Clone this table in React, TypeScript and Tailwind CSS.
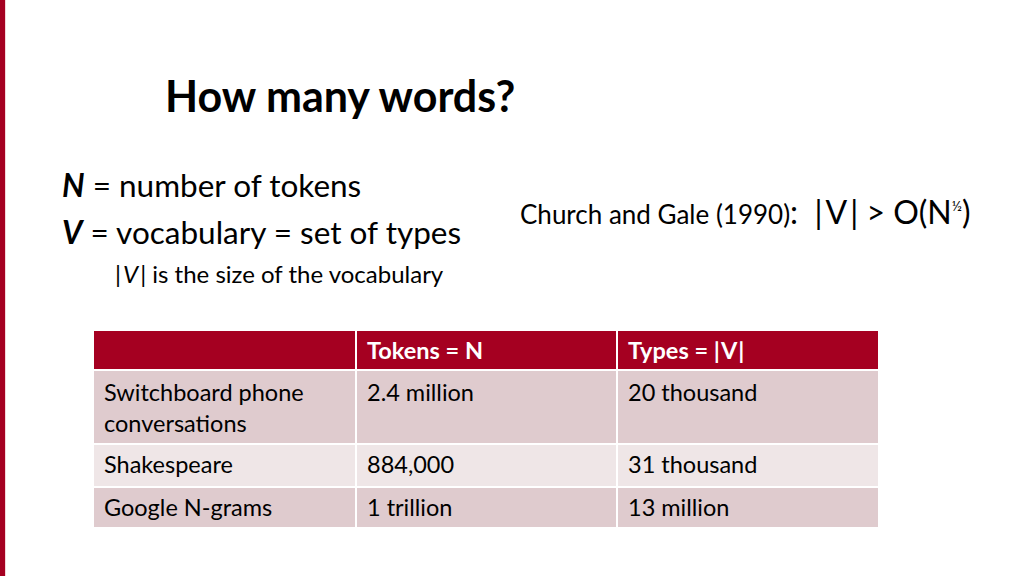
import React from "react";

const rows = [
  ["Switchboard phone conversations", "2.4 million", "20 thousand"],
  ["Shakespeare", "884,000", "31 thousand"],
  ["Google N-grams", "1 trillion", "13 million"],
];

export default function App() {
  return (
    <div
      className="w-[1024px] h-[576px] bg-white flex overflow-hidden text-black"
      style={{ fontFamily: "Lato, 'Open Sans', sans-serif" }}
    >
      <div className="w-[5px] h-full bg-[#a50021] border-r border-[#f3d6da] box-content" />
      <div className="flex-1 flex flex-col">
        <h1 className="ml-[159px] mt-[68px] text-[43px] leading-[56px] font-bold">How many words?</h1>
        <div className="flex mt-[38px]">
          <div className="ml-[56px] w-[458px] flex flex-col">
            <div className="text-[31.5px] leading-[47px] whitespace-nowrap">
              <span className="font-bold italic">N</span> = number of tokens
            </div>
            <div className="text-[31.5px] leading-[47px] whitespace-nowrap">
              <span className="font-bold italic">V</span> = vocabulary = set of types
            </div>
            <div className="ml-[53px] text-[24px] leading-[35px] whitespace-nowrap">
              |<span className="italic mx-[2px]">V</span>| is the size of the vocabulary
            </div>
          </div>
          <div className="mt-[30px] text-[32px] leading-[40px] whitespace-nowrap">
            <span className="text-[26px]">Church and Gale (1990)</span>
            <span>
              :&nbsp; |<span className="mx-[3px]">V</span>| &gt; O(N
              <span className="text-[14px] relative -top-[13px]">½</span>)
            </span>
          </div>
        </div>
        <div className="ml-[88px] mt-[40px] w-[786px] flex flex-col gap-[2px] text-[23.5px]">
          <div className="grid grid-cols-[261px_259px_260px] gap-[2px] h-[38px] bg-white">
            <div className="bg-[#a50021]" />
            <div className="bg-[#a50021] text-white font-bold px-[10px] leading-[38px]">Tokens = N</div>
            <div className="bg-[#a50021] text-white font-bold px-[10px] leading-[38px]">
              Types = |<span className="mx-[1px]">V</span>|
            </div>
          </div>
          {rows.map((r, i) => (
            <div
              key={i}
              className={`grid grid-cols-[261px_259px_260px] gap-[2px] ${i === 0 ? "h-[72px]" : i === 1 ? "h-[41px]" : "h-[39px]"}`}
            >
              {r.map((c, j) => (
                <div
                  key={j}
                  className={`${i === 1 ? "bg-[#efe6e7]" : "bg-[#dfcbce]"} px-[10px] ${i === 0 ? "pt-[6px]" : "pt-[4px]"} leading-[31px]`}
                >
                  {c}
                </div>
              ))}
            </div>
          ))}
        </div>
      </div>
    </div>
  );
}
